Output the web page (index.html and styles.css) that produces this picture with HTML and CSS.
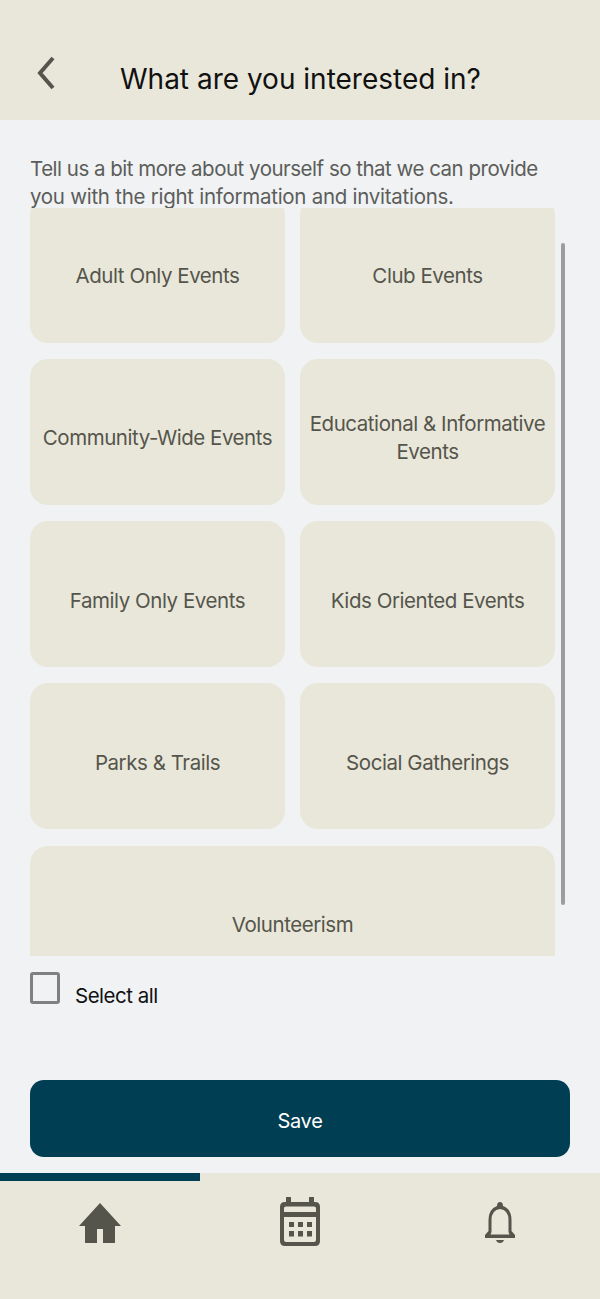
FILE: index.html
```html
<!DOCTYPE html>
<html>
	<head>
		<title>What are you interested in?</title>
		<meta name="viewport" content="width=device-width, initial-scale=1" />
		<link rel="stylesheet" href="styles.css">
	</head>
	<body>
		<header class="TopBar">
			<svg class="BackIcon" width="20" height="34" viewBox="0 0 20 34"><path d="M17 2 L4 17 L17 32" /></svg>
			<h1 class="Title">What are you interested in?</h1>
		</header>

		<main class="Content">
			<p class="Intro">Tell us a bit more about yourself so that we can provide <span class="IntroEnd">you with the right information and invitations.</span></p>

			<div class="ScrollArea">
				<div class="TileGrid">
					<div class="Tile">Adult Only Events</div>
					<div class="Tile">Club Events</div>
					<div class="Tile">Community-Wide Events</div>
					<div class="Tile">Educational &amp; Informative Events</div>
					<div class="Tile">Family Only Events</div>
					<div class="Tile">Kids Oriented Events</div>
					<div class="Tile">Parks &amp; Trails</div>
					<div class="Tile">Social Gatherings</div>
					<div class="Tile Wide">Volunteerism</div>
				</div>
				<div class="ScrollThumb"></div>
			</div>

			<label class="SelectAll">
				<span class="CheckBox"></span>
				<span class="SelectLabel">Select all</span>
			</label>

			<button class="SaveButton">Save</button>
		</main>

		<nav class="BottomNav">
			<div class="NavProgress"></div>
			<div class="NavIcons">
				<svg class="HomeIcon" width="42" height="40" viewBox="0 0 42 40"><path d="M21 0 L42 23 L36 23 L36 40 L24 40 L24 26 L18 26 L18 40 L6 40 L6 23 L0 23 Z" /></svg>
				<svg class="CalendarIcon" width="40" height="50" viewBox="0 0 40 50">
					<path fill-rule="evenodd" d="M6 0 H11 V5 H29 V0 H34 V5 H35 Q40 5 40 10 V44 Q40 49 35 49 H5 Q0 49 0 44 V10 Q0 5 5 5 H6 Z M4 20 V43 Q4 45 6 45 H34 Q36 45 36 43 V20 Z M4 11 V15 H36 V11 Q36 9.5 34 9.5 H6 Q4 9.5 4 11 Z" />
					<rect x="9" y="25" width="5" height="5" /><rect x="18" y="25" width="5" height="5" /><rect x="27" y="25" width="5" height="5" />
					<rect x="9" y="34" width="5" height="5.5" /><rect x="18" y="34" width="5" height="5.5" /><rect x="27" y="34" width="5" height="5.5" />
				</svg>
				<svg class="BellIcon" width="30" height="44" viewBox="0 0 30 44">
					<path fill-rule="evenodd" d="M15 0 Q18 0 18 4 Q26.5 7 26.5 18 V29 L30 33 V36 H0 V33 L3.5 29 V18 Q3.5 7 12 4 Q12 0 15 0 Z M15 7 Q6.5 8 6.5 18 V30 L5.5 32.5 H24.5 L23.5 30 V18 Q23.5 8 15 7 Z" />
					<path d="M11 38 H19 Q18 41 15 41 Q12 41 11 38 Z" />
				</svg>
			</div>
		</nav>
	</body>
</html>
```

FILE: styles.css
```css
:root
{
	--paper: #e9e7da;
	--page: #f0f2f4;
	--ink: #55554c;
	--navy: #003e54;
}

html
{
	background: var(--page);
	font-family: Inter, "Liberation Sans", sans-serif;
}

body
{
	margin: 0;
	height: 1299px;
	display: flex;
	flex-direction: column;
	overflow: hidden;
}

.TopBar
{
	height: 120px;
	background: var(--paper);
	display: flex;
	align-items: flex-start;
	flex: none;
}

.BackIcon
{
	margin: 56px 0 0 36px;
	fill: none;
	stroke: var(--ink);
	stroke-width: 4;
}

.Title
{
	margin: 59px 0 0 64px;
	font-size: 28px;
	line-height: 40px;
	font-weight: 400;
	color: #111;
	white-space: nowrap;
}

.Content
{
	flex: 1;
	padding: 35px 30px 0;
}

.Intro
{
	/* tiles scroll up under the last line */
	margin: 0 0 -3px;
	font-size: 20.5px;
	letter-spacing: -0.5px;
	line-height: 28px;
	color: #5c5d5a;
	width: 530px;
}

.IntroEnd
{
	letter-spacing: -0.27px;
}

.ScrollArea
{
	position: relative;
	width: 540px;
	height: 748px;
	overflow: hidden;
}

.TileGrid
{
	display: grid;
	grid-template-columns: 255px 255px;
	grid-auto-rows: 146px;
	column-gap: 15px;
	row-gap: 16.25px;
	margin-top: -11.5px;
}

.Tile
{
	box-sizing: border-box;
	padding-top: 13px;
	background: var(--paper);
	border-radius: 18px;
	display: flex;
	align-items: center;
	justify-content: center;
	text-align: center;
	font-size: 20.5px;
	letter-spacing: -0.45px;
	line-height: 28px;
	color: var(--ink);
}

.Wide
{
	grid-column: span 2;
}

.ScrollThumb
{
	position: absolute;
	left: 531px;
	top: 35px;
	width: 4px;
	height: 662px;
	background: #9b9da1;
	border-radius: 2px;
}

.SelectAll
{
	display: flex;
	align-items: flex-start;
	margin-top: 16px;
	height: 108px;
}

.CheckBox
{
	box-sizing: border-box;
	width: 30px;
	height: 32px;
	border: 3px solid #808080;
	border-radius: 3px;
}

.SelectLabel
{
	margin: 10px 0 0 15px;
	font-size: 20.5px;
	letter-spacing: -0.5px;
	line-height: 28px;
	color: #111;
}

.SaveButton
{
	display: block;
	width: 540px;
	height: 77px;
	padding-top: 5px;
	border: 0;
	border-radius: 14px;
	background: var(--navy);
	color: #fff;
	font-family: inherit;
	font-size: 20px;
	letter-spacing: -0.3px;
}

.BottomNav
{
	height: 126px;
	background: var(--paper);
	flex: none;
}

.NavProgress
{
	width: 200px;
	height: 8px;
	background: var(--navy);
}

.NavIcons
{
	display: grid;
	grid-template-columns: 200px 200px 200px;
	justify-items: center;
	align-items: start;
	fill: var(--ink);
}

.HomeIcon
{
	margin-top: 22px;
}

.CalendarIcon
{
	margin-top: 16px;
}

.BellIcon
{
	margin-top: 21px;
}
```
